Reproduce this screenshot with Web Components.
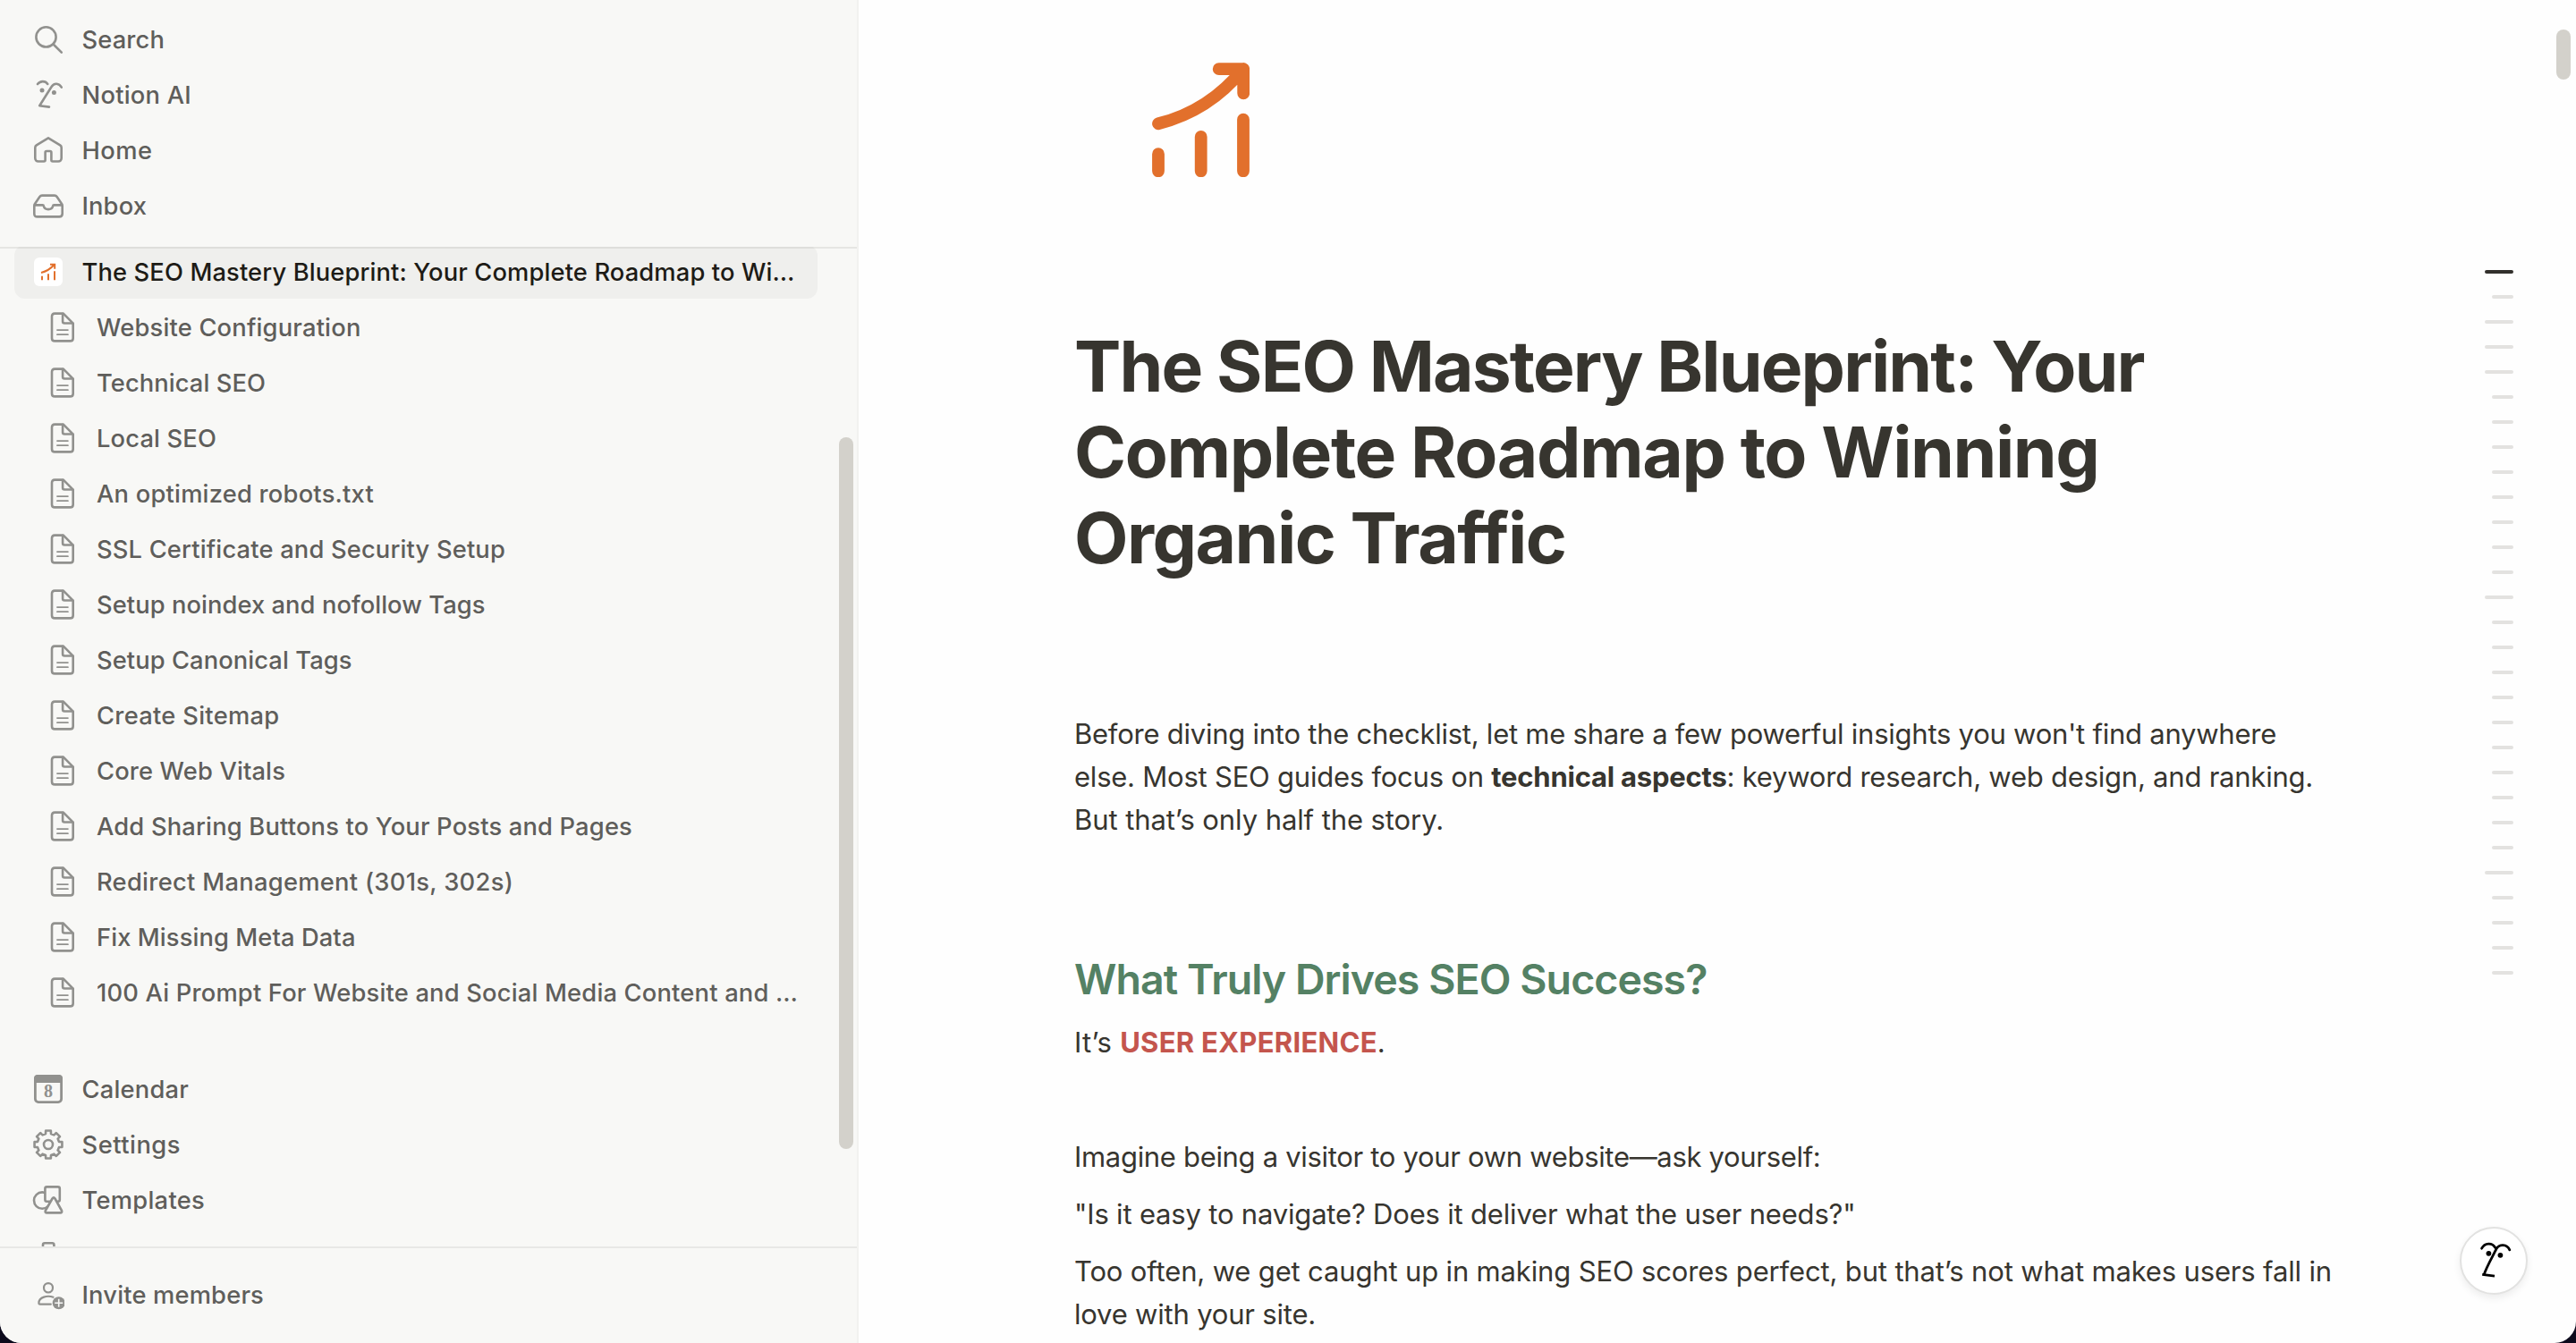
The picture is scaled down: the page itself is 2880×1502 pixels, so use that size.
<!DOCTYPE html>
<html lang="en">
<head>
<meta charset="utf-8">
<title>The SEO Mastery Blueprint</title>
<style>
    html, body {
        margin: 0;
        height: 100%;
        background: #0c0a1c;
    }
    body {
        font-family: Inter, "Liberation Sans", sans-serif;
        color: #37352f;
        overflow: hidden;
    }
</style>
</head>
<body>

<app-window>
    <side-bar slot="sidebar">
        <nav-item slot="top" icon="search" width="92.5">Search</nav-item>
        <nav-item slot="top" icon="face" width="122.5">Notion AI</nav-item>
        <nav-item slot="top" icon="home" width="79">Home</nav-item>
        <nav-item slot="top" icon="inbox" width="72.5">Inbox</nav-item>

        <nav-item icon="chart" selected width="797">The SEO Mastery Blueprint: Your Complete Roadmap to Wi…</nav-item>
        <nav-item icon="page" child width="295.5">Website Configuration</nav-item>
        <nav-item icon="page" child width="189">Technical SEO</nav-item>
        <nav-item icon="page" child width="134">Local SEO</nav-item>
        <nav-item icon="page" child width="310">An optimized robots.txt</nav-item>
        <nav-item icon="page" child width="457">SSL Certificate and Security Setup</nav-item>
        <nav-item icon="page" child width="434.5">Setup noindex and nofollow Tags</nav-item>
        <nav-item icon="page" child width="285.5">Setup Canonical Tags</nav-item>
        <nav-item icon="page" child width="204.5">Create Sitemap</nav-item>
        <nav-item icon="page" child width="211">Core Web Vitals</nav-item>
        <nav-item icon="page" child width="599">Add Sharing Buttons to Your Posts and Pages</nav-item>
        <nav-item icon="page" child width="466">Redirect Management (301s, 302s)</nav-item>
        <nav-item icon="page" child width="289.5">Fix Missing Meta Data</nav-item>
        <nav-item icon="page" child width="784">100 Ai Prompt For Website and Social Media Content and …</nav-item>

        <nav-item slot="tools" icon="calendar" width="119.5">Calendar</nav-item>
        <nav-item slot="tools" icon="gear" width="110.5">Settings</nav-item>
        <nav-item slot="tools" icon="shapes" width="137.5">Templates</nav-item>
        <nav-item slot="tools" icon="trash">Trash</nav-item>

        <nav-item slot="footer" icon="invite" width="203.5">Invite members</nav-item>
    </side-bar>

    <doc-page slot="page">
        <text-block kind="title">
            <text-line width="1195.5">The SEO Mastery Blueprint: Your</text-line>
            <text-line width="1145.5">Complete Roadmap to Winning</text-line>
            <text-line width="549.5">Organic Traffic</text-line>
        </text-block>
        <text-block kind="lead">
            <text-line width="1344">Before diving into the checklist, let me share a few powerful insights you won't find anywhere</text-line>
            <text-line width="1385">else. Most SEO guides focus on <b>technical aspects</b>: keyword research, web design, and ranking.</text-line>
            <text-line width="413">But that’s only half the story.</text-line>
        </text-block>
        <text-block kind="heading">
            <text-line width="707.5">What Truly Drives SEO Success?</text-line>
        </text-block>
        <text-block kind="first">
            <text-line width="348">It’s <b style="color:#c4554d">USER EXPERIENCE</b>.</text-line>
        </text-block>
        <text-block kind="spaced">
            <text-line width="834.5">Imagine being a visitor to your own website—ask yourself:</text-line>
        </text-block>
        <text-block>
            <text-line width="873.5">"Is it easy to navigate? Does it deliver what the user needs?"</text-line>
        </text-block>
        <text-block>
            <text-line width="1406">Too often, we get caught up in making SEO scores perfect, but that’s not what makes users fall in</text-line>
            <text-line width="270">love with your site.</text-line>
        </text-block>
    </doc-page>
</app-window>

<script>
// eight-toothed outline around the centre of a 36px box
const gearPath = () => {
    const pts = []
    for (let i = 0; i < 8; i++) {
        for (const [deg, r] of [[-14, 12.4], [-10.5, 15.7], [10.5, 15.7], [14, 12.4]]) {
            const a = (i * 45 + deg - 90) * Math.PI / 180
            pts.push((18 + r * Math.cos(a)).toFixed(2) + " " + (18 + r * Math.sin(a)).toFixed(2))
        }
    }
    return "M" + pts.join("L") + "Z"
}

const icons = {
    search: `<circle cx="15.5" cy="15.4" r="11.1"/><path d="M23.6 23.5L32.8 32.7"/>`,
    face: `<path d="M6 6C9 2.3 14.5 2 17.3 6M32.8 9.6C30 4.7 24.4 4.3 21.6 9L8.2 30.2L19 31.6"/>
        <circle cx="11" cy="13.1" r="2.5" fill="currentColor" stroke="none"/>
        <circle cx="24.4" cy="15.4" r="2.5" fill="currentColor" stroke="none"/>`,
    home: `<path d="M18 4.4L31.2 12.4Q32.7 13.4 32.7 15V27A3.5 3.5 0 0 1 29.2 30.5H22.9Q21.4 30.5 21.4 29V20.5Q21.4 19 19.9 19H16.1Q14.6 19 14.6 20.5V29Q14.6 30.5 13.1 30.5H6.8A3.5 3.5 0 0 1 3.3 27V15Q3.3 13.4 4.8 12.4Z"/>`,
    inbox: `<path d="M11 6.6H25Q26.6 6.6 27.6 8L33 16Q33.7 17.2 33.7 18.6V27Q33.7 30.4 30.3 30.4H5.7Q2.3 30.4 2.3 27V18.6Q2.3 17.2 3 16L8.4 8Q9.4 6.6 11 6.6Z"/>
        <path d="M2.8 17.4H11.5Q12.8 17.4 13 18.7C14 23.2 22 23.2 23 18.7Q23.2 17.4 24.5 17.4H33.2"/>`,
    chart: `<rect x="2" y="2" width="32" height="32" rx="6" fill="#fff" stroke="none"/>
        <g stroke="#e2702c" stroke-width="2" stroke-linecap="butt"><path d="M11 22.8V27.3M18 20.3V27.3M25 17.3V27.3"/>
        <path stroke-linejoin="miter" d="M10 18.9Q18.5 17 24.6 10M20 9.7H25.2V14.7"/></g>`,
    page: `<path d="M18.8 2.6H9.2Q6 2.6 6 5.8V30.2Q6 33.4 9.2 33.4H26.5Q29.7 33.4 29.7 30.2V13.6Z"/>
        <path d="M18.1 3V11.5Q18.1 13.5 20.1 13.5H29.2"/>
        <path stroke-width="1.8" d="M12 21.1H23.9M12 26.2H23.9"/>`,
    calendar: `<rect x="3.4" y="3.4" width="29.2" height="29.2" rx="3.5" stroke-width="2.8"/>
        <path d="M2 10.9V6Q2 2 6 2H30Q34 2 34 6V10.9Z" fill="currentColor" stroke="none"/>
        <text x="18" y="27.3" text-anchor="middle" font-family="Liberation Serif, serif" font-weight="700" font-size="20" fill="currentColor" stroke="none">8</text>`,
    gear: `<path d="${gearPath()}"/><circle cx="18" cy="18" r="5"/>`,
    shapes: `<circle cx="11.2" cy="18.6" r="9.2"/>
        <rect x="14.4" y="3.4" width="16.4" height="16.4" rx="2" fill="#f8f8f6"/>
        <path fill="#f8f8f6" d="M22.5 16.5Q24 14.2 25.5 16.5L33 30Q33.8 32.4 31.4 32.4H16.4Q14 32.4 14.8 30Z"/>`,
    trash: `<path d="M12 12V6.3Q12 4.3 14 4.3H22.4Q24.4 4.3 24.4 6.3V12M3 10H33M6 10L8 32H28L30 10"/>`,
    invite: `<g stroke-width="2.2"><ellipse cx="18" cy="10.3" rx="5" ry="5.2"/>
        <path d="M23.5 20.7C17 18.4 7.4 20.6 7.4 27.3Q7.4 28.7 9 28.7H20.8"/></g>
        <circle cx="29.7" cy="27.2" r="7" fill="currentColor" stroke="none"/>
        <path stroke="#f8f8f6" stroke-width="1.6" stroke-linecap="butt" d="M25.2 27.2H34.2M29.7 22.7V31.7"/>`
}

// squeezes or opens the letter spacing so that the text takes a given width
const fitText = (el, text, width) => {
    if (!width) return
    const natural = el.getBoundingClientRect().width
    el.style.letterSpacing = ((width - natural) / text.length) + "px"
}

class AppWindow extends HTMLElement {

    constructor() {
        super()
        this.attachShadow({mode: "open"}).innerHTML = `
            <style>
            :host {
                display: flex;
                height: 100vh;
                overflow: hidden;
                border-radius: 0 0 24px 24px;
                background: #fefefe;
            }
            ::slotted([slot="sidebar"]) {
                flex: 0 0 958px;
            }
            ::slotted([slot="page"]) {
                flex: 1;
            }
            </style>
            <slot name="sidebar"></slot>
            <slot name="page"></slot>
        `
    }

}

class SideBar extends HTMLElement {

    constructor() {
        super()
        this.attachShadow({mode: "open"}).innerHTML = `
            <style>
            :host {
                display: flex;
                flex-direction: column;
                position: relative;
                background: #f8f8f6;
                border-right: 2px solid #f2f2f0;
            }
            .group {
                display: flex;
                flex-direction: column;
                gap: 2px;
            }
            .top {
                position: relative;
                z-index: 1;
                padding: 14px 0 16px;
                margin-bottom: -2px;
                border-bottom: 2px solid rgba(55, 53, 47, 0.09);
            }
            .scroll {
                flex: 1;
                min-height: 0;
                overflow: hidden;
            }
            .pages {
                margin-top: -2px;
            }
            .tools {
                margin-top: 48px;
            }
            .footer {
                box-sizing: border-box;
                height: 108px;
                padding-top: 22px;
                border-top: 2px solid #e8e8e6;
            }
            .thumb {
                position: absolute;
                right: 4px;
                top: 489px;
                width: 16px;
                height: 796px;
                border-radius: 8px;
                background: #d3d1cb;
            }
            </style>
            <div class="group top"><slot name="top"></slot></div>
            <div class="scroll">
                <div class="group pages"><slot></slot></div>
                <div class="group tools"><slot name="tools"></slot></div>
            </div>
            <div class="footer"><slot name="footer"></slot></div>
            <div class="thumb"></div>
        `
    }

}

class NavItem extends HTMLElement {

    constructor() {
        super()
        this.shadowDOM = this.attachShadow({mode: "open"})
    }

    connectedCallback() {
        this.render()
        fitText(this.shadowDOM.querySelector(".label"), this.textContent, Number(this.getAttribute("width")))
    }

    render() {
        this.shadowDOM.innerHTML = `
            <style>
            :host {
                display: flex;
                align-items: center;
                box-sizing: border-box;
                height: 60px;
                margin: 0 44px 0 16px;
                padding-left: 20px;
                gap: 19.5px;
                border-radius: 12px;
                font-size: 27.3px;
                font-weight: 500;
                line-height: 36px;
                color: #5f5e5b;
                white-space: nowrap;
            }
            :host([child]) {
                padding-left: 36px;
                gap: 20px;
            }
            :host([selected]) {
                background: #efefed;
                color: #1d1b16;
            }
            svg {
                flex: none;
                width: 36px;
                height: 36px;
                color: #91918e;
                fill: none;
                stroke: currentColor;
                stroke-width: 2.6;
                stroke-linecap: round;
                stroke-linejoin: round;
            }
            .label {
                flex: none;
                padding-top: 1px;
            }
            </style>
            <svg viewBox="0 0 36 36">${icons[this.getAttribute("icon")]}</svg>
            <span class="label"><slot></slot></span>
        `
    }

}

class TextLine extends HTMLElement {

    constructor() {
        super()
        this.attachShadow({mode: "open"}).innerHTML = `
            <style>
            :host {
                display: block;
                width: max-content;
                white-space: nowrap;
            }
            ::slotted(b) {
                font-weight: 650;
            }
            </style>
            <slot></slot>
        `
    }

    connectedCallback() {
        fitText(this, this.textContent, Number(this.getAttribute("width")))
    }

}

class TextBlock extends HTMLElement {

    constructor() {
        super()
        this.attachShadow({mode: "open"}).innerHTML = `
            <style>
            :host {
                display: block;
                margin-top: 16px;
                font-size: 31px;
                line-height: 48px;
            }
            :host([kind="title"]) {
                margin-top: 164px;
                font-size: 78.5px;
                font-weight: 700;
                line-height: 96px;
            }
            :host([kind="lead"]) {
                margin-top: 147px;
            }
            :host([kind="heading"]) {
                margin-top: 123px;
                font-size: 46.5px;
                font-weight: 600;
                line-height: 62px;
                color: #548164;
            }
            :host([kind="first"]) {
                margin-top: 16px;
            }
            :host([kind="spaced"]) {
                margin-top: 80px;
            }
            </style>
            <slot></slot>
        `
    }

}

class OutlineRail extends HTMLElement {

    constructor() {
        super()
        const long = [0, 2, 3, 4, 13, 24]
        const bars = Array.from({length: 29}, (_, i) =>
            `<i class="${long.includes(i) ? "long" : ""} ${i === 0 ? "current" : ""}"></i>`
        ).join("")
        this.attachShadow({mode: "open"}).innerHTML = `
            <style>
            :host {
                display: flex;
                flex-direction: column;
                align-items: flex-end;
                gap: 24px;
            }
            i {
                width: 24px;
                height: 4px;
                border-radius: 2px;
                background: #e3e2e0;
            }
            .long {
                width: 32px;
            }
            .current {
                background: #32302c;
            }
            </style>
            ${bars}
        `
    }

}

class AiButton extends HTMLElement {

    constructor() {
        super()
        this.attachShadow({mode: "open"}).innerHTML = `
            <style>
            :host {
                display: block;
                box-sizing: border-box;
                width: 76px;
                height: 76px;
                border: 2px solid #e2e2e1;
                border-radius: 50%;
                background: #fff;
                box-shadow: 0 4px 8px rgba(15, 15, 15, 0.07);
            }
            svg {
                display: block;
                width: 72px;
                height: 72px;
                fill: none;
                stroke: #000;
                stroke-width: 2.8;
            }
            </style>
            <svg viewBox="2 2 72 72">
                <path stroke-linecap="round" d="M24.6 24.2C28 17.6 36.4 17.6 39.6 23.2M55.8 25.8C52.8 19.3 44.4 19 41 24.6"/>
                <path d="M41 24.6C38 31 30 44.5 27 54M25.2 53.4L39 55.2" />
                <circle cx="32.4" cy="29.8" r="2.9" fill="#000" stroke="none"/>
                <circle cx="45.4" cy="31.8" r="2.9" fill="#000" stroke="none"/>
            </svg>
        `
    }

}

class DocPage extends HTMLElement {

    constructor() {
        super()
        this.attachShadow({mode: "open"}).innerHTML = `
            <style>
            :host {
                display: flex;
                justify-content: space-between;
                align-items: flex-start;
                position: relative;
                height: 100%;
                overflow: hidden;
            }
            article {
                padding: 70px 0 0 241px;
            }
            .icon {
                display: block;
                width: 109px;
                height: 128px;
                margin-left: 87px;
                fill: none;
                stroke: #e2702c;
                stroke-width: 13.8;
                stroke-linecap: round;
                stroke-linejoin: round;
            }
            outline-rail {
                margin: 302px 70px 0 0;
            }
            ai-button {
                position: absolute;
                right: 54px;
                bottom: 54px;
            }
            .thumb {
                position: absolute;
                top: 33px;
                right: 6px;
                width: 16px;
                height: 56px;
                border-radius: 8px;
                background: #d3d1cb;
            }
            </style>
            <article>
                <svg class="icon" viewBox="108 30 109 128">
                    <path d="M115 132.2V151.3M162.7 113V151.3M210 93.7V151.3"/>
                    <path d="M115 98.3Q172 84 210 37M182.7 37.2H210.2V64.3"/>
                </svg>
                <slot></slot>
            </article>
            <outline-rail></outline-rail>
            <ai-button></ai-button>
            <div class="thumb"></div>
        `
    }

}

customElements.define("app-window", AppWindow)
customElements.define("side-bar", SideBar)
customElements.define("outline-rail", OutlineRail)
customElements.define("ai-button", AiButton)
customElements.define("doc-page", DocPage)
customElements.define("text-block", TextBlock)
customElements.define("text-line", TextLine)
customElements.define("nav-item", NavItem)
</script>
</body>
</html>
